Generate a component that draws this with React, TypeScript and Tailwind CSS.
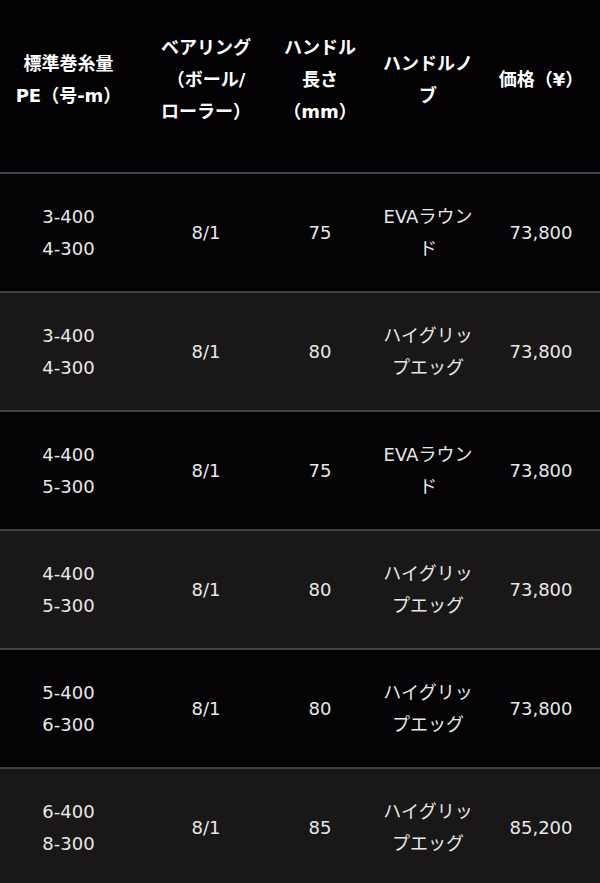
import React from 'react'

type Row = {
    line: string[],
    bearing: string,
    length: string,
    knob: string[],
    price: string
}

const rows: Row[] = [
    { line: ['3-400', '4-300'], bearing: '8/1', length: '75', knob: ['EVAラウン', 'ド'], price: '73,800' },
    { line: ['3-400', '4-300'], bearing: '8/1', length: '80', knob: ['ハイグリッ', 'プエッグ'], price: '73,800' },
    { line: ['4-400', '5-300'], bearing: '8/1', length: '75', knob: ['EVAラウン', 'ド'], price: '73,800' },
    { line: ['4-400', '5-300'], bearing: '8/1', length: '80', knob: ['ハイグリッ', 'プエッグ'], price: '73,800' },
    { line: ['5-400', '6-300'], bearing: '8/1', length: '80', knob: ['ハイグリッ', 'プエッグ'], price: '73,800' },
    { line: ['6-400', '8-300'], bearing: '8/1', length: '85', knob: ['ハイグリッ', 'プエッグ'], price: '85,200' },
]

const headers: string[][] = [
    ['標準巻糸量', 'PE（号-m）'],
    ['ベアリング', '（ボール/', 'ローラー）'],
    ['ハンドル', '長さ', '（mm）'],
    ['ハンドルノ', 'ブ'],
    ['価格（¥）'],
]

const gridCols = "grid grid-cols-[137px_138px_90px_126px_100px]"

function Lines(props: { items: string[] }) {
    return (
        <div className='flex flex-col items-center'>
            {props.items.map((t, i) => (
                <span key={i} className='whitespace-nowrap'>{t}</span>
            ))}
        </div>
    )
}

export default function App() {
    return (
        <div
            className="min-h-screen w-[600px] bg-[#050305] overflow-hidden text-[18px] leading-[32px]"
            style={{ fontFamily: '"DejaVu Sans", "Noto Sans CJK JP", sans-serif' }}>

            {/* header */}
            <div className={`${gridCols} h-[172px] pb-[12px] bg-[#040204] text-white font-bold`}>
                {headers.map((h, i) => (
                    <div key={i} className='flex items-center justify-center'>
                        <Lines items={h} />
                    </div>
                ))}
            </div>

            {rows.map((r, idx) => (
                <div
                    key={idx}
                    className={`${gridCols} h-[119px] border-t-2 border-[#423f45] text-[#e8e8e8] ${idx % 2 === 0 ? 'bg-[#050305]' : 'bg-[#1a1719]'}`}>
                    <div className='flex items-center justify-center'>
                        <Lines items={r.line} />
                    </div>
                    <div className='flex items-center justify-center'>{r.bearing}</div>
                    <div className='flex items-center justify-center'>{r.length}</div>
                    <div className='flex items-center justify-center'>
                        <Lines items={r.knob} />
                    </div>
                    <div className='flex items-center justify-center'>{r.price}</div>
                </div>
            ))}
        </div>
    )
}
